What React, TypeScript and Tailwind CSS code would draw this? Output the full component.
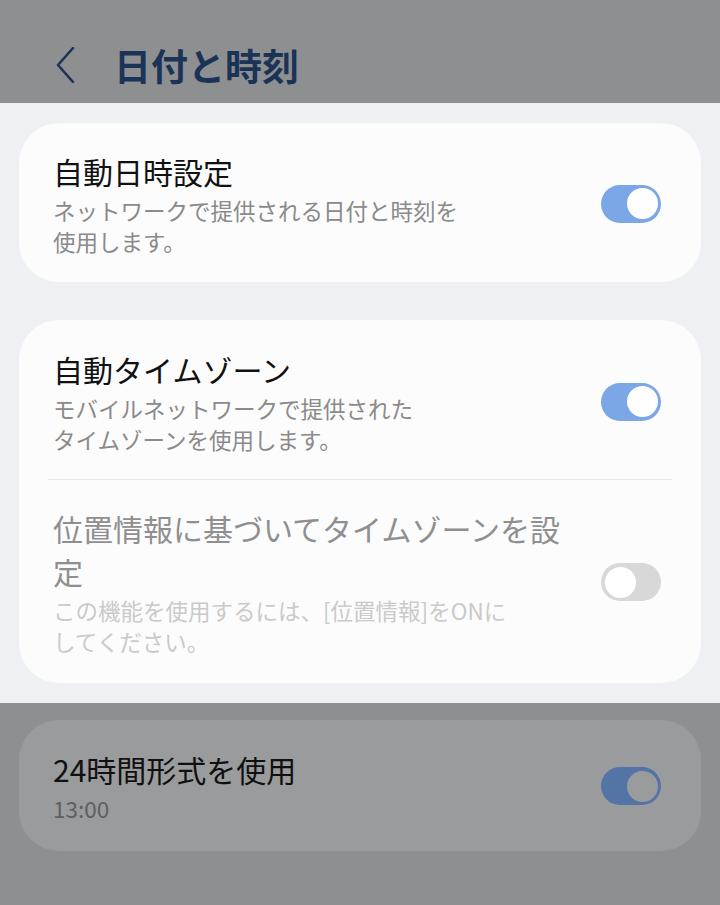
import React from 'react';

const font = { fontFamily: '"Noto Sans CJK JP", "Noto Sans", sans-serif' };

type ToggleProps = { on: boolean; dimmed?: boolean };

const Toggle = ({ on, dimmed }: ToggleProps) => {
  const track = dimmed ? 'bg-[#5474a6]' : on ? 'bg-[#7ba7e6]' : 'bg-[#d8d8d8]';
  const knob = dimmed ? 'bg-[#9a9b9d]' : 'bg-white';
  return (
    <div className={`relative h-[38px] w-[60px] shrink-0 rounded-full ${track}`}>
      <div
        className={`absolute top-[3.5px] h-[31px] w-[31px] rounded-full ${knob} ${on ? 'right-[3.5px]' : 'left-[3.5px]'}`}
      />
    </div>
  );
};

type RowProps = {
  title: React.ReactNode;
  subtitle: React.ReactNode;
  on: boolean;
  disabled?: boolean;
  className?: string;
};

const Row = ({ title, subtitle, on, disabled, className = '' }: RowProps) => (
  <div className={`flex items-center justify-between pl-[34px] pr-[40px] ${className}`}>
    <div className="flex flex-col">
      <div className={`text-[30px] leading-[43px] ${disabled ? 'text-[#8f8f8f]' : 'text-[#111111]'}`}>{title}</div>
      <div className={`mt-[2px] text-[22.5px] leading-[31px] ${disabled ? 'text-[#cacaca]' : 'text-[#8a8a8a]'}`}>
        {subtitle}
      </div>
    </div>
    <Toggle on={on} />
  </div>
);

export default function App() {
  return (
    <div className="flex h-[905px] w-[720px] flex-col overflow-hidden bg-[#8e8f91]" style={font}>
      {/* dimmed header */}
      <header className="flex h-[103px] shrink-0 items-center gap-[38px] pt-[27px] pl-[56px]">
        <svg width="20" height="36" viewBox="0 0 20 36" fill="none">
          <polyline points="17,1 2,18 17,35" stroke="#1a3357" strokeWidth="2.6" strokeLinecap="round" strokeLinejoin="round" />
        </svg>
        <h1 className="text-[37px] font-bold leading-none text-[#1a3357]">日付と時刻</h1>
      </header>

      {/* highlighted section */}
      <section className="flex flex-col gap-[38px] bg-[#eef0f3] px-[19px] pt-[20px] pb-[20px]">
        <div className="rounded-[40px] bg-[#fcfcfd] pt-[27px] pb-[25px]">
          <Row
            title="自動日時設定"
            subtitle={
              <>
                ネットワークで提供される日付と時刻を
                <br />
                使用します。
              </>
            }
            on
          />
        </div>

        <div className="flex flex-col rounded-[40px] bg-[#fcfcfd] pt-[28px] pb-[26px]">
          <Row
            title="自動タイムゾーン"
            subtitle={
              <>
                モバイルネットワークで提供された
                <br />
                タイムゾーンを使用します。
              </>
            }
            on
            className="pb-[24px]"
          />
          <div className="mx-[29px] h-px bg-[#e5e6e8]" />
          <Row
            title={
              <>
                位置情報に基づいてタイムゾーンを設
                <br />
                定
              </>
            }
            subtitle={
              <>
                この機能を使用するには、[位置情報]をONに
                <br />
                してください。
              </>
            }
            on={false}
            disabled
            className="pt-[27px]"
          />
        </div>
      </section>

      {/* dimmed lower card */}
      <div className="px-[19px] pt-[17px]">
        <div className="flex items-center justify-between rounded-[40px] bg-[#9a9b9d] pt-[28px] pb-[27px] pl-[34px] pr-[40px]">
          <div className="flex flex-col">
            <div className="text-[30px] leading-[43px] text-[#101010]">24時間形式を使用</div>
            <div className="mt-[2px] text-[22.5px] leading-[31px] text-[#5e5f61]">13:00</div>
          </div>
          <Toggle on dimmed />
        </div>
      </div>
    </div>
  );
}
